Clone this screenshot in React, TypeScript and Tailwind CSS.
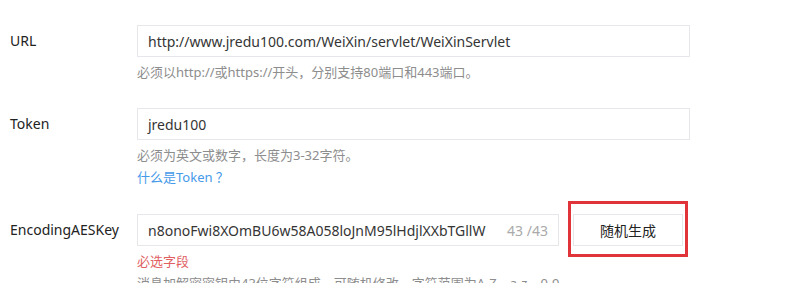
import React from "react";

const font = { fontFamily: '"Noto Sans", "Noto Sans CJK SC", sans-serif' };

export default function App() {
  return (
    <div
      className="h-[283px] w-[803px] overflow-hidden bg-white text-[14px] text-[#222]"
      style={font}
    >
      <div className="flex flex-col pt-[25px]">
        {/* URL */}
        <div className="flex">
          <div className="w-[137px] shrink-0 pl-[10px] leading-[32px]">URL</div>
          <div className="flex flex-col">
            <div className="flex h-[32px] w-[553px] items-center border border-[#e7e7eb] px-[10px] text-[#353535]">
              http://www.jredu100.com/WeiXin/servlet/WeiXinServlet
            </div>
            <div className="mt-[4px] text-[13px] leading-[22px] text-[#8d8d8d]">
              必须以http://或https://开头，分别支持80端口和443端口。
            </div>
          </div>
        </div>

        {/* Token */}
        <div className="mt-[25px] flex">
          <div className="w-[137px] shrink-0 pl-[10px] leading-[32px]">Token</div>
          <div className="flex flex-col">
            <div className="flex h-[32px] w-[553px] items-center border border-[#e7e7eb] px-[10px] text-[#353535]">
              jredu100
            </div>
            <div className="mt-[4px] text-[13px] leading-[22px] text-[#8d8d8d]">
              必须为英文或数字，长度为3-32字符。
            </div>
            <a className="text-[13px] leading-[22px] text-[#459ae9]">什么是Token ？</a>
          </div>
        </div>

        {/* EncodingAESKey */}
        <div className="mt-[26px] flex">
          <div className="w-[137px] shrink-0 pl-[10px] leading-[32px]">EncodingAESKey</div>
          <div className="flex flex-col">
            <div className="flex items-start">
              <div className="flex h-[32px] w-[422px] items-center border border-[#e7e7eb] pl-[10px] pr-[10px] text-[#353535]">
                <span className="flex-1 overflow-hidden whitespace-nowrap">
                  n8onoFwi8XOmBU6w58A058loJnM95lHdjlXXbTGllW
                </span>
                <span className="ml-[4px] text-[#aaa]">43 /43</span>
              </div>
              <div className="relative ml-[14px]">
                <button className="flex h-[32px] w-[110px] items-center justify-center border border-[#e7e7eb] bg-white text-[14px] text-[#222]">
                  随机生成
                </button>
                <span className="pointer-events-none absolute left-[-5px] right-[-5px] top-[-13px] bottom-[-11px] border-[3px] border-[#e0343a]" />
              </div>
            </div>
            <div className="mt-[4px] text-[13px] leading-[22px] text-[#e15f63]">必选字段</div>
            <div className="text-[13px] leading-[22px] text-[#8d8d8d]">
              消息加解密密钥由43位字符组成，可随机修改，字符范围为A-Z，a-z，0-9。
            </div>
          </div>
        </div>
      </div>
    </div>
  );
}
